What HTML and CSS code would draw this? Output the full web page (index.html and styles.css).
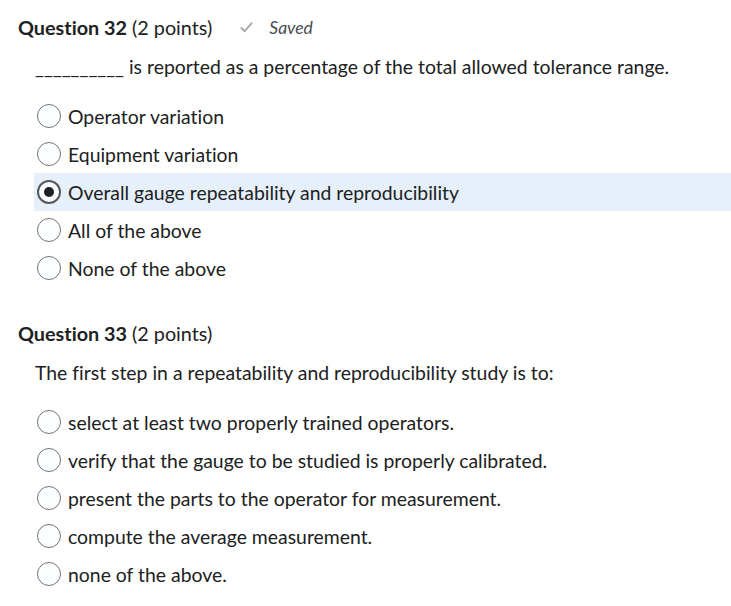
FILE: index.html
```html
<!DOCTYPE html>
<html lang="en">
<head>
<meta charset="utf-8">
<title>Quiz</title>
<link rel="stylesheet" href="styles.css">
</head>
<body>
<main class="quiz">
  <section class="question">
    <div class="q-head">
      <h2 class="q-title"><strong>Question 32</strong> (2 points)</h2>
      <span class="saved">
        <svg class="check" viewBox="0 0 14 12" width="13" height="11" aria-hidden="true"><path d="M1.5 6.5 L5 10 L12.5 1.5" fill="none" stroke="#a7abae" stroke-width="2.2" stroke-linecap="round" stroke-linejoin="round"/></svg>
        <em>Saved</em>
      </span>
    </div>
    <p class="stem">__________ is reported as a percentage of the total allowed tolerance range.</p>
    <ul class="options">
      <li class="option"><span class="radio"></span><span>Operator variation</span></li>
      <li class="option"><span class="radio"></span><span>Equipment variation</span></li>
      <li class="option selected"><span class="radio checked"></span><span>Overall gauge repeatability and reproducibility</span></li>
      <li class="option"><span class="radio"></span><span>All of the above</span></li>
      <li class="option"><span class="radio"></span><span>None of the above</span></li>
    </ul>
  </section>
  <section class="question">
    <div class="q-head">
      <h2 class="q-title"><strong>Question 33</strong> (2 points)</h2>
    </div>
    <p class="stem">The first step in a repeatability and reproducibility study is to:</p>
    <ul class="options">
      <li class="option"><span class="radio"></span><span>select at least two properly trained operators.</span></li>
      <li class="option"><span class="radio"></span><span>verify that the gauge to be studied is properly calibrated.</span></li>
      <li class="option"><span class="radio"></span><span>present the parts to the operator for measurement.</span></li>
      <li class="option"><span class="radio"></span><span>compute the average measurement.</span></li>
      <li class="option"><span class="radio"></span><span>none of the above.</span></li>
    </ul>
  </section>
</main>
</body>
</html>
```
FILE: styles.css
```css
html, body {
  margin: 0;
  padding: 0;
  background: #ffffff;
}
body {
  font-family: Lato, "Open Sans", "Liberation Sans", sans-serif;
  color: #202122;
  font-size: 19.4px;
  font-variant-ligatures: none;
}
.quiz {
  padding: 13px 0 0 18px;
  display: flex;
  flex-direction: column;
  gap: 32px;
}
.question {
  display: flex;
  flex-direction: column;
}
.q-head {
  display: flex;
  align-items: center;
  height: 28px;
}
.q-title {
  margin: 0;
  font-size: 19.8px;
  font-weight: 400;
  line-height: 28px;
}
.q-title strong {
  font-weight: 700;
}
.saved {
  display: flex;
  align-items: center;
  margin-left: 28px;
  color: #494c4e;
  font-size: 17.5px;
}
.saved .check {
  margin-right: 16px;
}
.stem {
  margin: 12px 0 0 17px;
  line-height: 28px;
}
.options {
  list-style: none;
  margin: 16px 0 0 16px;
  padding: 0;
}
.option {
  display: flex;
  align-items: center;
  height: 38px;
  padding-left: 3px;
  gap: 7px;
}
.option.selected {
  background: #e6f0fa;
}
.radio {
  box-sizing: border-box;
  width: 24px;
  height: 24px;
  border-radius: 50%;
  border: 1.5px solid #6e7376;
  background: #fcfdff;
  flex: none;
  display: flex;
  align-items: center;
  justify-content: center;
}
.radio.checked {
  border: 2px solid #55595c;
}
.radio.checked::after {
  content: "";
  width: 10px;
  height: 10px;
  border-radius: 50%;
  background: #202122;
}
```
